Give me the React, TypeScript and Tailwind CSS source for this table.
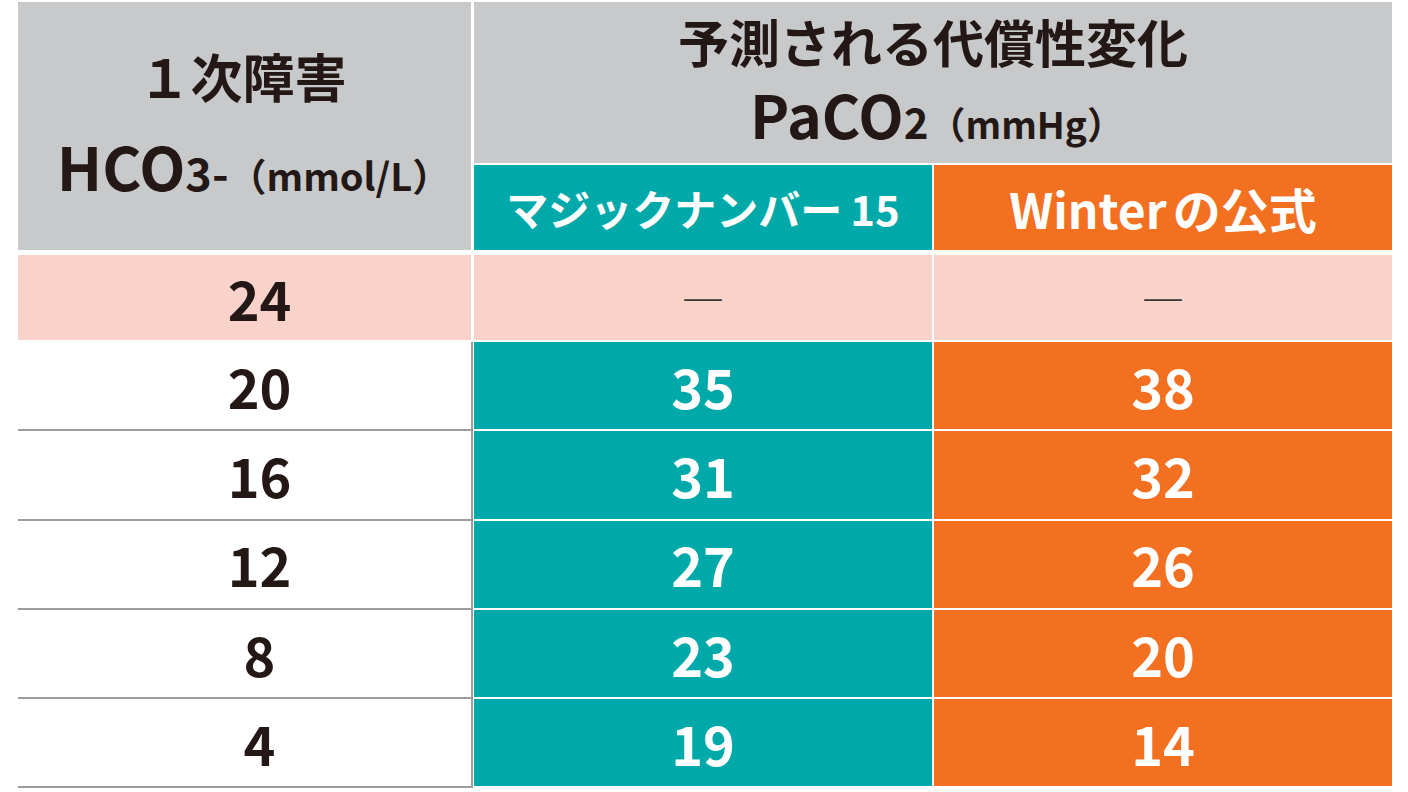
import React from "react";

const rows = [
  { a: "20", b: "35", c: "38" },
  { a: "16", b: "31", c: "32" },
  { a: "12", b: "27", c: "26" },
  { a: "8", b: "23", c: "20" },
  { a: "4", b: "19", c: "14" },
];

export default function App() {
  return (
    <div
      className="w-[1408px] h-[792px] bg-white pl-[18px] pt-[2px] text-[#231815] font-semibold overflow-hidden"
      style={{ fontFamily: '"Noto Sans CJK JP", "Noto Sans", sans-serif' }}
    >
      {/* Header */}
      <div className="flex h-[248px]">
        <div className="w-[453px] bg-[#c8c9cb] flex flex-col items-center pt-[48px]">
          <div className="text-[52px] leading-none pr-[4px]">１次障害</div>
          <div className="mt-[33px] leading-none whitespace-nowrap flex items-baseline pl-[18px]">
            <span className="text-[60px]">HCO</span>
            <span className="text-[45px]">3-</span>
            <span className="text-[38px]">（mmol/L）</span>
          </div>
        </div>
        <div className="ml-[3px] w-[918px] flex flex-col">
          <div className="h-[161px] bg-[#c8c9cb] flex flex-col items-center pt-[14px]">
            <div className="text-[51px] leading-none">予測される代償性変化</div>
            <div className="mt-[17px] leading-none whitespace-nowrap flex items-baseline pl-[8px]">
              <span className="text-[59px]">PaCO</span>
              <span className="text-[42px]">2</span>
              <span className="text-[37px]">（mmHg）</span>
            </div>
          </div>
          <div className="mt-[2px] flex h-[85px]">
            <div className="w-[458px] bg-[#00a9a9] text-white flex items-center justify-center text-[42px] leading-none whitespace-nowrap">
              マジックナンバー<span className="ml-[8px]">15</span>
            </div>
            <div className="ml-[2px] w-[458px] bg-[#f37021] text-white flex items-center justify-center text-[48px] leading-none whitespace-nowrap">
              Winter<span className="ml-[6px]">の公式</span>
            </div>
          </div>
        </div>
      </div>

      {/* Baseline row */}
      <div className="mt-[5px] flex h-[85px]">
        <div className="w-[453px] bg-[#f9d3ca] flex items-center justify-center text-[54px] leading-none pl-[30px]">
          24
        </div>
        <div className="ml-[3px] w-[458px] bg-[#f9d3ca] flex items-center justify-center text-[44px] font-normal leading-none text-[#3a3a3a]">
          ―
        </div>
        <div className="ml-[2px] w-[458px] bg-[#f9d3ca] flex items-center justify-center text-[44px] font-normal leading-none text-[#3a3a3a]">
          ―
        </div>
      </div>

      {/* Data rows */}
      <div className="mt-[2px] flex flex-col">
        {rows.map((r) => (
          <div key={r.a} className="flex h-[89.3px]">
            <div className="w-[455px] bg-white border-b-2 border-r-2 border-[#9c9c9c] flex items-center justify-center text-[54px] leading-none pl-[30px]">
              {r.a}
            </div>
            <div className="ml-[1px] w-[458px] bg-[#00a9a9] border-b-2 border-white text-white flex items-center justify-center text-[54px] leading-none">
              {r.b}
            </div>
            <div className="ml-[2px] w-[458px] bg-[#f37021] border-b-2 border-white text-white flex items-center justify-center text-[54px] leading-none">
              {r.c}
            </div>
          </div>
        ))}
      </div>
    </div>
  );
}
